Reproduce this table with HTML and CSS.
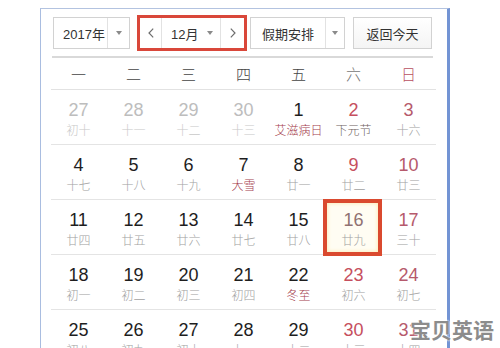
FILE: index.html
```html
<!DOCTYPE html>
<html lang="zh-CN">
<head>
<meta charset="utf-8">
<title>万年历</title>
<link rel="stylesheet" href="styles.css">
</head>
<body>
<div class="panel">
  <div class="bar">
    <div class="sel sel-year"><span class="sel-text">2017年</span><span class="sel-arrow"><i class="caret"></i></span></div>
    <div class="month-nav">
      <span class="nav-btn nav-prev"><svg width="6" height="10" viewBox="0 0 6 10"><polyline points="5.2,0.6 1,5 5.2,9.4" fill="none" stroke="#6d6d6d" stroke-width="1.2"/></svg></span>
      <span class="month-sel"><span class="month-text">12月</span><i class="caret"></i></span>
      <span class="nav-btn nav-next"><svg width="6" height="10" viewBox="0 0 6 10"><polyline points="0.8,0.6 5,5 0.8,9.4" fill="none" stroke="#6d6d6d" stroke-width="1.2"/></svg></span>
    </div>
    <div class="sel sel-holiday"><span class="sel-text">假期安排</span><span class="sel-arrow"><i class="caret"></i></span></div>
    <button class="today-btn">返回今天</button>
  </div>

  <div class="cal">
    <div class="week-head">
      <span>一</span><span>二</span><span>三</span><span>四</span><span>五</span><span class="wh-sat">六</span><span class="wh-sun">日</span>
    </div>
    <div class="week">
      <div class="day other"><b>27</b><em>初十</em></div>
      <div class="day other"><b>28</b><em>十一</em></div>
      <div class="day other"><b>29</b><em>十二</em></div>
      <div class="day other"><b>30</b><em>十三</em></div>
      <div class="day"><b>1</b><em class="fest">艾滋病日</em></div>
      <div class="day wkend"><b>2</b><em class="fest2">下元节</em></div>
      <div class="day wkend sun"><b>3</b><em>十六</em></div>
    </div>
    <div class="week">
      <div class="day"><b>4</b><em>十七</em></div>
      <div class="day"><b>5</b><em>十八</em></div>
      <div class="day"><b>6</b><em>十九</em></div>
      <div class="day"><b>7</b><em class="fest">大雪</em></div>
      <div class="day"><b>8</b><em>廿一</em></div>
      <div class="day wkend"><b>9</b><em>廿二</em></div>
      <div class="day wkend sun"><b>10</b><em>廿三</em></div>
    </div>
    <div class="week">
      <div class="day"><b>11</b><em>廿四</em></div>
      <div class="day"><b>12</b><em>廿五</em></div>
      <div class="day"><b>13</b><em>廿六</em></div>
      <div class="day"><b>14</b><em>廿七</em></div>
      <div class="day"><b>15</b><em>廿八</em></div>
      <div class="day today"><b>16</b><em>廿九</em></div>
      <div class="day wkend sun"><b>17</b><em>三十</em></div>
    </div>
    <div class="week">
      <div class="day"><b>18</b><em>初一</em></div>
      <div class="day"><b>19</b><em>初二</em></div>
      <div class="day"><b>20</b><em>初三</em></div>
      <div class="day"><b>21</b><em>初四</em></div>
      <div class="day"><b>22</b><em class="fest">冬至</em></div>
      <div class="day wkend"><b>23</b><em>初六</em></div>
      <div class="day wkend sun"><b>24</b><em>初七</em></div>
    </div>
    <div class="week">
      <div class="day"><b>25</b><em>初八</em></div>
      <div class="day"><b>26</b><em>初九</em></div>
      <div class="day"><b>27</b><em>初十</em></div>
      <div class="day"><b>28</b><em>十一</em></div>
      <div class="day"><b>29</b><em>十二</em></div>
      <div class="day wkend"><b>30</b><em>十三</em></div>
      <div class="day wkend sun"><b>31</b><em>十四</em></div>
    </div>
  </div>
</div>
<div class="watermark">宝贝英语</div>
</body>
</html>
```

FILE: styles.css
```css
* { box-sizing: border-box; }

html, body {
  margin: 0;
  height: 100%;
  overflow: hidden;
  background: #ffffff;
}

body {
  position: relative;
  font-family: "Liberation Sans", "Noto Sans CJK SC", sans-serif;
  color: #333;
}

.panel {
  margin: 8px 0 0 40px;
  width: 410px;
  height: 340px;
  overflow: hidden;
  background: #fff;
  border-left: 1px solid #a9bde0;
  border-top: 1px solid #b3c3e0;
  border-right: 3px solid #7394d4;
}

/* toolbar */
.bar {
  display: flex;
  align-items: center;
  margin: 0 14px 0 11px;
  padding: 8px 0 7px 1px;
  border-bottom: 2px solid #d9d9d9;
}

.sel {
  display: flex;
  height: 32px;
  border: 1px solid #d2d2d2;
  background: #fff;
  font-size: 13px;
  color: #333;
}

.sel-text {
  display: flex;
  align-items: center;
  padding-left: 9px;
  border-right: 1px solid #e2e2e2;
}

.sel-arrow {
  display: flex;
  align-items: center;
  justify-content: center;
}

.sel-year { width: 77px; }
.sel-year .sel-text { width: 54px; }
.sel-year .sel-arrow { width: 21px; }

.sel-holiday { width: 95px; margin-left: 3px; }
.sel-holiday .sel-text { width: 75px; padding-left: 11px; }
.sel-holiday .sel-arrow { width: 18px; }

.caret {
  display: block;
  width: 0;
  height: 0;
  border-left: 3.5px solid transparent;
  border-right: 3.5px solid transparent;
  border-top: 4px solid #8a8a8a;
}

.month-nav {
  display: flex;
  height: 36px;
  margin: -2px 0 -2px 7px;
  width: 110px;
  border: 3px solid #d9473a;
  background: #fff;
  font-size: 13px;
  color: #333;
}

.nav-btn {
  display: flex;
  align-items: center;
  justify-content: center;
}
.nav-prev { width: 22px; border-right: 1px solid #e2e2e2; }
.nav-next { width: 24px; border-left: 1px solid #e2e2e2; }

.month-sel {
  display: flex;
  align-items: center;
  flex: 1;
  padding-left: 9px;
}
.month-text { margin-right: 9px; }

.today-btn {
  height: 32px;
  width: 79px;
  margin-left: 8px;
  padding: 0;
  border: 1px solid #d2d2d2;
  background: linear-gradient(#ffffff, #f4f4f4);
  font-family: "Liberation Sans", "Noto Sans CJK SC", sans-serif;
  font-size: 13px;
  color: #333;
}

/* calendar */
.cal {
  margin-left: 10px;
  width: 385px;
}

.week-head {
  display: grid;
  grid-template-columns: repeat(7, 55px);
  height: 32px;
  border-bottom: 1px solid #e2e2e2;
  align-items: center;
  font-family: "Noto Sans CJK SC", sans-serif;
  font-weight: 300;
  font-size: 15px;
  color: #444;
}
.week-head span { text-align: center; }
.week-head .wh-sat { color: #777; }
.week-head .wh-sun { color: #b9505f; }

.week {
  display: grid;
  grid-template-columns: repeat(7, 55px);
  height: 55px;
  border-bottom: 1px solid #e4e4e4;
}

.day {
  position: relative;
  display: flex;
  flex-direction: column;
  align-items: center;
  padding-top: 10px;
}

.day b {
  font-weight: normal;
  font-size: 18px;
  line-height: 20px;
  color: #1e1e1e;
}

.day em {
  font-style: normal;
  font-family: "Noto Sans CJK SC", sans-serif;
  font-weight: 300;
  font-size: 12px;
  line-height: 20px;
  color: #a2a2a2;
}

.day.other b { color: #bdbdbd; }
.day.other em { color: #c9c9c9; }

.day.wkend b { color: #c64f5e; }
.day.sun b { color: #b65a6c; }

.day em.fest { color: #a5404e; }
.day em.fest2 { color: #6e5f5f; }

.day.today { background: #fffdf3; }
.day.today b { color: #907272; }
.day.today::after {
  content: "";
  position: absolute;
  top: -1px;
  right: -1px;
  bottom: -2px;
  left: -3px;
  border: 4px solid #da4a2f;
  box-shadow: inset 0 0 4px #fbe7a6;
}

.watermark {
  position: absolute;
  left: 410px;
  top: 317px;
  font-family: "Noto Sans CJK SC", sans-serif;
  font-weight: bold;
  font-size: 21px;
  line-height: 24px;
  color: #8c8c8c;
  text-shadow: 0 0 2px #fff, 0 0 2px #fff;
}
```
